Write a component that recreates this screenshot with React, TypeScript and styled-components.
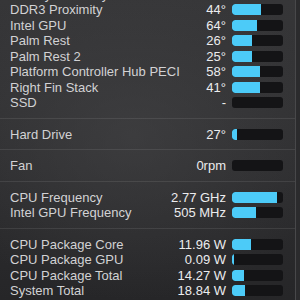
import { FC } from "react";
import styled, { createGlobalStyle } from "styled-components";

const GlobalStyle = createGlobalStyle`
  html, body {
    margin: 0;
    padding: 0;
    background: #2a2a2c;
  }
  body {
    font-family: "Liberation Sans", Arial, sans-serif;
    -webkit-font-smoothing: antialiased;
  }
`;

type Reading = {
  label: string;
  value: string;
  fill: number; // px of the 51px track
};

// the list is scrolled, first row is only partly visible at the top
const sections: Reading[][] = [
  [
    { label: "Battery Proximity", value: "33°", fill: 22 },
    { label: "DDR3 Proximity", value: "44°", fill: 29 },
    { label: "Intel GPU", value: "64°", fill: 25 },
    { label: "Palm Rest", value: "26°", fill: 20 },
    { label: "Palm Rest 2", value: "25°", fill: 20 },
    { label: "Platform Controller Hub PECI", value: "58°", fill: 28 },
    { label: "Right Fin Stack", value: "41°", fill: 28 },
    { label: "SSD", value: "-", fill: 0 },
  ],
  [{ label: "Hard Drive", value: "27°", fill: 5 }],
  [{ label: "Fan", value: "0rpm", fill: 0 }],
  [
    { label: "CPU Frequency", value: "2.77 GHz", fill: 45 },
    { label: "Intel GPU Frequency", value: "505 MHz", fill: 24 },
  ],
  [
    { label: "CPU Package Core", value: "11.96 W", fill: 19 },
    { label: "CPU Package GPU", value: "0.09 W", fill: 1.5 },
    { label: "CPU Package Total", value: "14.27 W", fill: 12 },
    { label: "System Total", value: "18.84 W", fill: 13 },
  ],
];

const Frame = styled.div`
  width: 300px;
  height: 300px;
  display: flex;
  overflow: hidden;
`;

const Panel = styled.div`
  width: 296px;
  height: 300px;
  flex: none;
  overflow: hidden;
  border-right: 1px solid #48484a;
  box-sizing: border-box;
  background:
    radial-gradient(ellipse 70% 55% at 45% 45%, rgba(70, 70, 72, 0.55), rgba(70, 70, 72, 0) 100%),
    linear-gradient(180deg, #363638 0%, #303032 45%, #262628 100%);
`;

const Edge = styled.div`
  flex: 1;
  background: #2b2b2d;
`;

const List = styled.div`
  margin-top: -21.25px;
`;

const Section = styled.div`
  padding: 7.5px 0;
  & + & {
    border-top: 1px solid rgba(255, 255, 255, 0.09);
  }
`;

const Row = styled.div`
  height: 15.5px;
  display: grid;
  grid-template-columns: 1fr auto 51px;
  column-gap: 6px;
  align-items: center;
  padding: 0 12px 0 10px;
  font-size: 13px;
`;

const Label = styled.span`
  color: #d2d2d4;
  white-space: nowrap;
  overflow: hidden;
`;

const Value = styled.span`
  color: #ececee;
  text-align: right;
  white-space: nowrap;
`;

const Track = styled.div`
  height: 11px;
  border-radius: 3px;
  background: #141416;
  overflow: hidden;
`;

const Fill = styled.div`
  height: 100%;
  background: #4ccbf8;
  border-radius: 3px 0 0 3px;
`;

const SensorRow: FC<{ reading: Reading }> = ({ reading }) => (
  <Row>
    <Label>{reading.label}</Label>
    <Value>{reading.value}</Value>
    <Track>
      {reading.fill > 0 && <Fill style={{ width: reading.fill }} />}
    </Track>
  </Row>
);

const App: FC = () => {
  return (
    <>
      <GlobalStyle />
      <Frame>
        <Panel>
          <List>
            {sections.map((rows, i) => (
              <Section key={i}>
                {rows.map((r) => (
                  <SensorRow key={r.label} reading={r} />
                ))}
              </Section>
            ))}
          </List>
        </Panel>
        <Edge />
      </Frame>
    </>
  );
};

export default App;
